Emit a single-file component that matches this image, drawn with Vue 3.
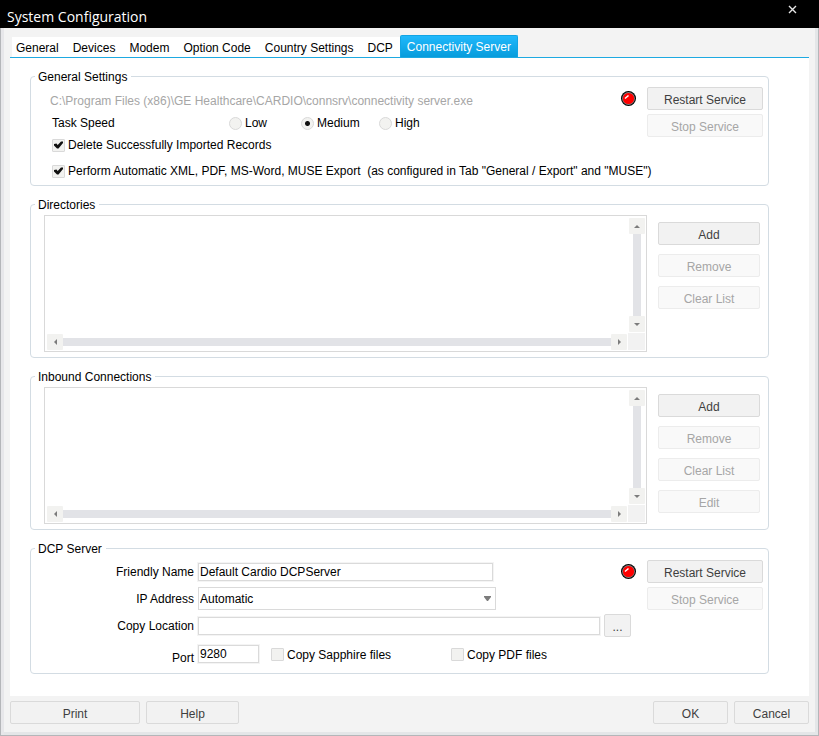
<template>
  <div class="window">
    <header class="titlebar">
      <h1>System Configuration</h1>
      <button type="button" class="close" aria-label="Close">
        <svg viewBox="0 0 9 9" width="9" height="9">
          <path d="M1 1L8 8M8 1L1 8" stroke="#e6e6e6" stroke-width="1.4" />
        </svg>
      </button>
    </header>
    <div class="frame">
      <nav class="tabs">
        <button
          v-for="tab in tabs"
          :key="tab"
          type="button"
          class="tab"
          :class="{ active: tab === activeTab }"
          @click="activeTab = tab"
        >
          {{ tab }}
        </button>
      </nav>
      <main class="panel">
        <fieldset>
          <legend>General Settings</legend>
          <div class="general">
            <div class="general-options">
              <p class="path">
                C:\Program Files (x86)\GE Healthcare\CARDIO\connsrv\connectivity
                server.exe
              </p>
              <div class="speed" role="radiogroup" aria-labelledby="speed">
                <span id="speed" class="speed-title">Task Speed</span>
                <label v-for="s in speeds" :key="s" class="speed-item">
                  <input v-model="speed" type="radio" name="speed" :value="s" />
                  {{ s }}
                </label>
              </div>
              <label class="check">
                <input v-model="deleteImported" type="checkbox" />
                Delete Successfully Imported Records
              </label>
              <label class="check export">
                <input v-model="autoExport" type="checkbox" />
                <span class="pre">{{ exportText }}</span>
              </label>
            </div>
            <svg class="led" viewBox="0 0 15 15" width="15" height="15">
              <circle cx="7.5" cy="7.5" r="7.5" fill="#000" />
              <circle cx="7.5" cy="7.5" r="6.4" fill="#808080" />
              <circle cx="7.5" cy="7.5" r="5.6" fill="#f00" />
              <path d="M4 7.5L7.5 4.5" stroke="#fff" stroke-width="1.5" />
            </svg>
            <div class="service">
              <button type="button" class="btn">Restart Service</button>
              <button type="button" class="btn" disabled>Stop Service</button>
            </div>
          </div>
        </fieldset>

        <fieldset v-for="list in lists" :key="list.title">
          <legend>{{ list.title }}</legend>
          <div class="list-row">
            <div class="list">
              <div class="list-items"></div>
              <div class="scroll vertical">
                <button type="button" aria-label="Up">
                  <svg viewBox="0 0 6 3" width="6" height="3">
                    <path d="M0 3L3 0L6 3Z" fill="#7c7c7c" />
                  </svg>
                </button>
                <div class="track"></div>
                <button type="button" aria-label="Down">
                  <svg viewBox="0 0 6 3" width="6" height="3">
                    <path d="M0 0H6L3 3Z" fill="#7c7c7c" />
                  </svg>
                </button>
              </div>
              <div class="scroll horizontal">
                <button type="button" aria-label="Left">
                  <svg viewBox="0 0 3 6" width="3" height="6">
                    <path d="M3 0V6L0 3Z" fill="#7c7c7c" />
                  </svg>
                </button>
                <div class="track"></div>
                <button type="button" aria-label="Right">
                  <svg viewBox="0 0 3 6" width="3" height="6">
                    <path d="M0 0L3 3L0 6Z" fill="#7c7c7c" />
                  </svg>
                </button>
              </div>
              <div class="corner"></div>
            </div>
            <div class="list-buttons">
              <button
                v-for="name in list.buttons"
                :key="name"
                type="button"
                class="btn"
                :disabled="name !== 'Add'"
              >
                {{ name }}
              </button>
            </div>
          </div>
        </fieldset>

        <fieldset>
          <legend>DCP Server</legend>
          <div class="dcp">
            <div class="fields">
              <label for="friendly">Friendly Name</label>
              <div class="field">
                <input id="friendly" v-model="friendly" type="text" class="text name" />
                <svg class="led" viewBox="0 0 15 15" width="15" height="15">
                  <circle cx="7.5" cy="7.5" r="7.5" fill="#000" />
                  <circle cx="7.5" cy="7.5" r="6.4" fill="#808080" />
                  <circle cx="7.5" cy="7.5" r="5.6" fill="#f00" />
                  <path d="M4 7.5L7.5 4.5" stroke="#fff" stroke-width="1.5" />
                </svg>
              </div>
              <label for="ip">IP Address</label>
              <div class="field">
                <div class="select">
                  <select id="ip" v-model="ip">
                    <option>Automatic</option>
                  </select>
                  <svg viewBox="0 0 7 5" width="7" height="5">
                    <path d="M0 0H7V1L4 5H3L0 1Z" fill="#7c7c7c" />
                  </svg>
                </div>
              </div>
              <label for="location">Copy Location</label>
              <div class="field location">
                <input id="location" v-model="location" type="text" class="text" />
                <button type="button" class="btn browse">...</button>
              </div>
              <label for="port" class="port-label">Port</label>
              <div class="field">
                <input id="port" v-model="port" type="text" class="text port" />
                <label class="check sapphire">
                  <input v-model="copySapphire" type="checkbox" />
                  Copy Sapphire files
                </label>
                <label class="check">
                  <input v-model="copyPdf" type="checkbox" />
                  Copy PDF files
                </label>
              </div>
            </div>
            <div class="service">
              <button type="button" class="btn">Restart Service</button>
              <button type="button" class="btn" disabled>Stop Service</button>
            </div>
          </div>
        </fieldset>
      </main>
      <footer class="footer">
        <button type="button" class="btn print">Print</button>
        <button type="button" class="btn help">Help</button>
        <button type="button" class="btn ok">OK</button>
        <button type="button" class="btn cancel">Cancel</button>
      </footer>
    </div>
  </div>
</template>

<script setup>
import { ref } from "vue";

const tabs = [
  "General",
  "Devices",
  "Modem",
  "Option Code",
  "Country Settings",
  "DCP",
  "Connectivity Server",
];
const activeTab = ref("Connectivity Server");

const speeds = ["Low", "Medium", "High"];
const speed = ref("Medium");
const deleteImported = ref(true);
const autoExport = ref(true);
// two spaces before the bracket are kept by white-space: pre
const exportText =
  'Perform Automatic XML, PDF, MS-Word, MUSE Export  (as configured in Tab "General / Export" and "MUSE")';

const lists = [
  { title: "Directories", buttons: ["Add", "Remove", "Clear List"] },
  {
    title: "Inbound Connections",
    buttons: ["Add", "Remove", "Clear List", "Edit"],
  },
];

const friendly = ref("Default Cardio DCPServer");
const ip = ref("Automatic");
const location = ref("");
const port = ref("9280");
const copySapphire = ref(false);
const copyPdf = ref(false);
</script>

<style>
body {
  margin: 0;
}
</style>

<style scoped>
.window {
  min-height: 100vh;
  display: flex;
  flex-direction: column;
  color: #000;
  font-family: "Liberation Sans", Arial, sans-serif;
  font-size: 12px;
  line-height: 16px;
}
button,
input,
select {
  font: inherit;
  color: inherit;
  margin: 0;
  padding: 0;
  box-sizing: border-box;
}
.titlebar {
  height: 28px;
  display: flex;
  justify-content: space-between;
  background-color: #000;
  color: #fff;
}
.titlebar h1 {
  margin: 0;
  padding: 7px 0 0 7px;
  font-family: "Open Sans", "Noto Sans", sans-serif;
  font-size: 14px;
  font-weight: 400;
  line-height: 20px;
}
.close {
  width: 53px;
  height: 19px;
  border: none;
  background: none;
}
.close svg {
  display: block;
  margin: 0 auto;
}
.frame {
  flex: 1;
  display: flex;
  flex-direction: column;
  padding: 7px 5px 0 6px;
  border: 1px solid #b4b6b9;
  border-top: none;
  background-color: #f3f3f3;
  box-shadow: inset 3px 0 #e7e7ea, inset -3px -3px #e4e6e8;
}
.tabs {
  display: flex;
  align-items: flex-end;
  margin: 0 4px 0 3px;
  padding-left: 2px;
  border-bottom: 1px solid #1ea9e1;
}
.tab {
  height: 20px;
  padding: 2px 7px 0;
  border: none;
  background-color: #fff;
}
.tab:first-child {
  padding-left: 4px;
}
.tab.active {
  height: 22px;
  padding: 1px 6px 0;
  border: 1px solid #12a4e4;
  border-bottom: none;
  border-radius: 2px 2px 0 0;
  background: linear-gradient(#20b8fb, #079cdc);
  color: #fff;
}
.panel {
  flex: 1;
  display: flex;
  flex-direction: column;
  gap: 10px;
  margin: 0 4px 0 3px;
  padding: 10px 40px 22px 20px;
  background-color: #fff;
}
fieldset {
  min-width: 0;
  margin: 0;
  padding: 0;
  border: 1px solid #d3dce3;
  border-radius: 4px;
}
legend {
  margin-left: 4px;
  padding: 1px 4px 0 3px;
}
.btn {
  height: 23px;
  padding-top: 2px;
  border: 1px solid #dadada;
  border-radius: 2px;
  background-color: #f2f2f2;
  color: #3f3f3f;
}
.btn:disabled {
  border-color: #ececec;
  background-color: #f9f9f9;
  color: #a6a6a6;
}
.service {
  width: 116px;
  display: flex;
  flex-direction: column;
  gap: 4px;
}
.led {
  flex: none;
}

/* general settings */
.general {
  display: flex;
  align-items: flex-start;
  padding: 2px 5px 6px 21px;
}
.general-options {
  flex: 1;
  min-width: 0;
  display: flex;
  flex-direction: column;
  gap: 6px;
  padding-top: 6px;
}
.general .led {
  margin: 4px 11px 0 0;
}
.path {
  margin: 0 0 0 -2px;
  color: #a6a6a6;
}
.speed {
  display: flex;
}
.speed-title {
  width: 177px;
}
.speed-item {
  display: flex;
  align-items: center;
  gap: 3px;
}
.speed-item:nth-of-type(1) {
  width: 72px;
}
.speed-item:nth-of-type(2) {
  width: 78px;
}
.check {
  display: flex;
  align-items: center;
  gap: 3px;
}
.export {
  margin-top: 4px;
}
.pre {
  white-space: pre;
}
input[type="radio"],
input[type="checkbox"] {
  appearance: none;
  flex: none;
  width: 13px;
  height: 13px;
  border: 1px solid #d9d9d9;
  border-radius: 1px;
  background: #f2f2f0 center no-repeat;
}
input[type="radio"] {
  border-radius: 50%;
}
input[type="radio"]:checked {
  background-image: radial-gradient(circle, #111 2px, transparent 3px);
}
input[type="checkbox"]:checked {
  background-image: url("data:image/svg+xml,%3Csvg xmlns='http://www.w3.org/2000/svg' width='11' height='11'%3E%3Cpath d='M1 4L3.5 3.5L4.7 5L8 1.5H10V3L5.5 8.5H4L1 5.5Z' fill='%23111'/%3E%3C/svg%3E");
}

/* list with its scroll bars */
.list-row {
  display: flex;
  gap: 11px;
  padding: 2px 8px 5px 13px;
}
.list {
  flex: 1;
  display: grid;
  grid-template-columns: 1fr 17px;
  grid-template-rows: 115px 17px;
  padding: 2px 1px 1px 2px;
  border: 1px solid #d9d9d9;
}
.scroll {
  display: flex;
  align-items: center;
}
.scroll.vertical {
  flex-direction: column;
  padding: 0 0 1px 1px;
}
.scroll.horizontal {
  padding: 1px 1px 0 0;
}
.scroll button {
  width: 16px;
  height: 16px;
  flex: none;
  display: flex;
  align-items: center;
  justify-content: center;
  border: none;
  border-radius: 1px;
  background-color: #f2f2f0;
}
.track {
  flex: 1;
  background-color: #e2e3e7;
}
.vertical .track {
  width: 8px;
}
.horizontal .track {
  height: 8px;
}
.corner {
  background-color: #f2f2f2;
}
.list-buttons {
  width: 102px;
  display: flex;
  flex-direction: column;
  gap: 9px;
  padding-top: 7px;
}

/* dcp server */
.dcp {
  display: flex;
  gap: 11px;
  padding: 3px 5px 7px 0;
}
.fields {
  flex: 1;
  display: grid;
  grid-template-columns: 163px 1fr;
  grid-template-rows: 23px 23px 23px 25px;
  gap: 4px;
  align-items: center;
}
.fields > label {
  text-align: right;
}
.fields > .port-label {
  align-self: end;
}
.field {
  display: flex;
  align-items: center;
}
.field .check {
  padding-top: 2px;
}
.text {
  height: 18px;
  padding: 0 1px;
  border: 1px solid #dadada;
  outline: 1px solid #f4f4f4;
  background-color: #fff;
}
.name {
  width: 295px;
  margin-right: auto;
}
.select {
  position: relative;
  width: 298px;
}
.select select {
  appearance: none;
  display: block;
  width: 100%;
  height: 23px;
  padding: 1px 0 0 1px;
  border: 1px solid #dadada;
  border-radius: 0;
  background-color: #fff;
}
.select svg {
  position: absolute;
  right: 5px;
  top: 9px;
  pointer-events: none;
}
.location {
  gap: 4px;
  padding-right: 5px;
}
.location .text {
  flex: 1;
}
.browse {
  width: 27px;
}
.port {
  width: 61px;
  margin-right: 12px;
}
.sapphire {
  width: 180px;
}

.footer {
  display: flex;
  gap: 6px;
  padding: 5px 4px 11px 3px;
}
.print {
  width: 130px;
}
.help {
  width: 93px;
}
.ok {
  width: 75px;
  margin-left: auto;
}
.cancel {
  width: 75px;
}
</style>
